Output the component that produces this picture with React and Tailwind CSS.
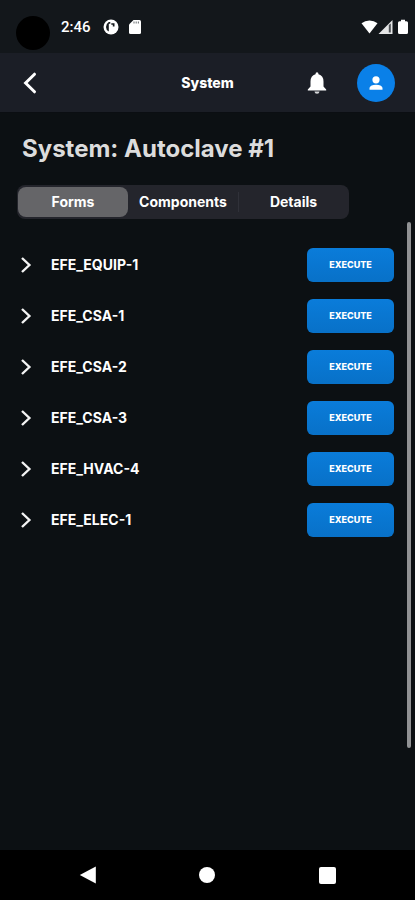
import { useState } from "react";

const forms = ["EFE_EQUIP-1", "EFE_CSA-1", "EFE_CSA-2", "EFE_CSA-3", "EFE_HVAC-4", "EFE_ELEC-1"];
const tabs = ["Forms", "Components", "Details"];

const StatusBar = () => (
    <div className="flex h-[53px] items-center bg-[#13171b] pl-4 pr-1.5 text-white">
        <div className="mt-3 size-[34px] rounded-full bg-black" />
        <span className="ml-[11px] font-['Roboto',sans-serif] text-[15px] leading-5 font-medium">2:46</span>
        <svg className="ml-3 size-4" viewBox="0 0 16 16">
            <circle cx="8" cy="8" r="7.5" fill="#fff" />
            <path d="M7.300 3H5.800Q3 4.800 3 8T5.800 12.600V4.800H7.300zM8.300 4.200h3.200v3.400H9.800V5.800H8.300z" fill="#13171b" />
        </svg>
        <svg className="ml-2 size-4" viewBox="0 0 16 16" fill="#fff">
            <path d="M6.500 1H12.500Q14 1 14 2.500V13.500Q14 15 12.500 15H3.500Q2 15 2 13.500V5.500z" />
            <path d="M7 2.600v2M9.200 2.600v2M11.400 2.600v2" stroke="#777b7e" strokeWidth="1.100" />
        </svg>
        <div className="ml-auto flex items-center">
            <svg className="h-4 w-[17px]" viewBox="0 0 17 16" fill="#fff">
                <path d="M0.500 4.200Q4 1.400 8.500 1.400T16.500 4.200L8.500 14.600z" />
            </svg>
            <svg className="h-4 w-[15px]" viewBox="0 0 15 16">
                <path d="M14.500 1V15H0.500z" fill="#e4e5e6" />
                <path d="M10.800 6v7.500h2V4.500z" fill="#4c5054" />
            </svg>
            <svg className="ml-1 h-4 w-[12px]" viewBox="0 0 12 16" fill="#fff">
                <path d="M4 0.800H8V2.200H9.500Q11 2.200 11 3.700V13.500Q11 15 9.500 15H2.500Q1 15 1 13.500V3.700Q1 2.200 2.500 2.200H4z" />
            </svg>
        </div>
    </div>
);

const Header = () => (
    <header className="grid h-[60px] grid-cols-3 items-center border-b border-[#0b0e12] bg-[#1b1e26] px-5">
        <button type="button" aria-label="Back" className="w-5">
            <svg
                className="h-6 w-5"
                viewBox="0 0 20 24"
                fill="none"
                stroke="#fff"
                strokeWidth="3"
                strokeLinecap="round"
            >
                <path d="M14.500 3.200L5.600 12L14.500 20.800" />
            </svg>
        </button>
        <h1 className="text-center text-[14px] leading-5 font-extrabold">System</h1>
        <div className="flex items-center justify-end gap-[30px]">
            <button type="button" aria-label="Notifications">
                <svg className="h-6 w-5" viewBox="0 0 20 24" fill="#fff">
                    <path d="M8.500 3.200Q8.500 1.200 10 1.200T11.500 3.200Q16.500 4.500 16.500 10.500V15.500L19.200 18.500V19.600H0.800V18.500L3.500 15.500V10.500Q3.500 4.500 8.500 3.200z" />
                    <path d="M7.500 20.500H12.500Q12.300 22.800 10 22.800T7.500 20.500z" fill="#d5d6d8" />
                </svg>
            </button>
            <button
                type="button"
                aria-label="Profile"
                className="flex size-[38px] items-center justify-center rounded-full bg-[#0a80e8]"
            >
                <svg className="size-4" viewBox="0 0 16 16" fill="#fff">
                    <circle cx="8" cy="4.800" r="3.600" />
                    <path d="M1.500 14.800V12.800Q2.500 9.800 8 9.800T14.500 12.800V14.800z" />
                </svg>
            </button>
        </div>
    </header>
);

const Tabs = ({ active, setActive }) => (
    <div role="tablist" className="ml-[17px] grid h-[34px] w-4/5 grid-cols-3 items-center rounded-lg bg-[#24252c] p-px">
        {tabs.map((tab, i) => (
            <button
                key={tab}
                type="button"
                role="tab"
                aria-selected={tab === active}
                onClick={() => setActive(tab)}
                className={
                    tab === active
                        ? "h-[30px] rounded-lg bg-[#656568] text-[14px] leading-5 font-bold"
                        : i === 2
                          ? "h-5 border-l border-[#303139] text-[14px] leading-5 font-bold"
                          : "h-5 text-[14px] leading-5 font-bold"
                }
            >
                {tab}
            </button>
        ))}
    </div>
);

const FormRow = ({ name }) => (
    <li className="flex items-center">
        <button type="button" className="flex items-center gap-[17px] text-[14px] leading-5 font-bold">
            <svg className="h-4 w-[14px]" viewBox="0 0 14 16" fill="none" stroke="#f4f4f4" strokeWidth="2.400">
                <path d="M2 1L9.400 8L2 15" />
            </svg>
            {name}
        </button>
        <button
            type="button"
            className="ml-auto h-[34px] w-[87px] rounded-md bg-linear-to-b from-[#0a7cda] to-[#0871c8] text-[9px] leading-4 font-extrabold"
        >
            EXECUTE
        </button>
    </li>
);

const NavBar = () => (
    <nav className="grid h-[50px] grid-cols-3 items-center justify-items-center bg-black px-7">
        <button type="button" aria-label="Back">
            <svg className="size-[18px]" viewBox="0 0 18 18" fill="#fff">
                <path d="M16.800 0.500V17.500L0.800 9z" />
            </svg>
        </button>
        <button type="button" aria-label="Home" className="size-4 rounded-full bg-white" />
        <button type="button" aria-label="Recent apps" className="size-[17px] rounded-xs bg-white" />
    </nav>
);

const App = () => {
    const [active, setActive] = useState("Forms");

    return (
        <div className="flex min-h-screen flex-col bg-[#0c1013] font-['Inter',sans-serif] text-white">
            <StatusBar />
            <Header />
            <main className="flex flex-1 flex-col">
                <h2 className="mt-5 ml-[22px] text-[24px] leading-8 font-bold text-[#dcdcdc]">System: Autoclave #1</h2>
                <div className="mt-5">
                    <Tabs active={active} setActive={setActive} />
                </div>
                <div className="mt-[3px] flex flex-1 pr-1">
                    <ul className="mt-[26px] flex flex-1 flex-col gap-[17px] pl-5">
                        {forms.map((name) => (
                            <FormRow key={name} name={name} />
                        ))}
                    </ul>
                    <div className="mb-[102px] ml-[13px] w-1 rounded-full bg-[#919294]" />
                </div>
            </main>
            <NavBar />
        </div>
    );
};

export default App;
